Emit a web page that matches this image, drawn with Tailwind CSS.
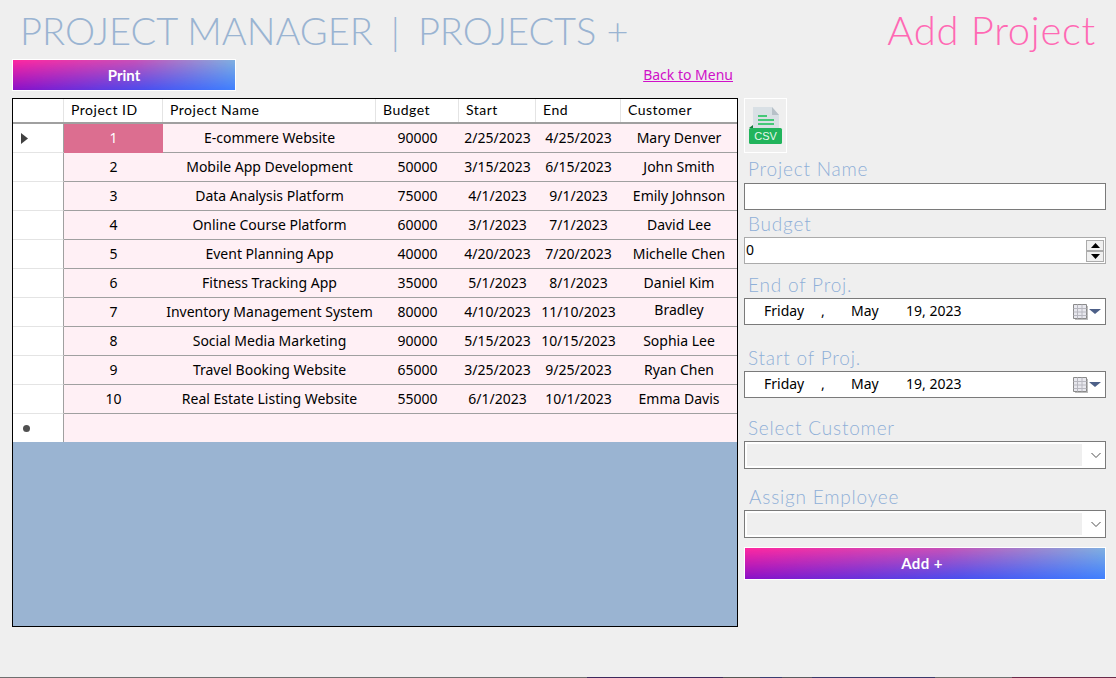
<!DOCTYPE html>
<html lang="en">
<head>
  <meta charset="UTF-8">
  <script src="https://cdn.jsdelivr.net/npm/@tailwindcss/browser@4"></script>
  <title>Project Manager | Projects +</title>
</head>
<body class="flex h-[678px] w-[1116px] flex-col overflow-hidden bg-[#efefef] font-['Noto_Sans',sans-serif] text-black">

  <header class="flex h-[59px] items-start justify-between pl-[20px] pr-[20px] pt-[7px]">
    <h1 class="flex font-['Lato',sans-serif] text-[38px] font-light leading-[46px] text-[#9ab4d2]"><span>PROJECT MANAGER</span><span class="ml-[18px]">|</span><span class="ml-[18px]">PROJECTS +</span></h1>
    <h2 class="font-['Lato',sans-serif] text-[40px] font-light leading-[46px] tracking-[0.7px] text-[#ff69b4]">Add Project</h2>
  </header>

  <div class="flex gap-[6px] pl-[12px]">
    <main class="w-[726px]">
      <div class="flex h-[39px] items-start justify-between pr-[5px]">
        <button class="relative flex h-[32px] w-[224px] items-center justify-center overflow-hidden border border-white bg-[linear-gradient(to_right,#8a10c8,#4a50f0_60%,#4080ff)] text-white">
          <span class="absolute inset-0 bg-[linear-gradient(to_right,#ff28a0,#c850b8_55%,#80b0e0)] [mask-image:linear-gradient(to_bottom,black,transparent)]"></span>
          <span class="relative font-['Lato',sans-serif] text-[15px] font-bold">Print</span>
        </button>
        <a href="#" class="mt-[6px] text-sm text-[#d010c8] underline">Back to Menu</a>
      </div>

      <div class="h-[529px] border border-black bg-[#9ab4d2] text-sm">
        <div class="grid h-[25px] grid-cols-[51px_99px_213px_83px_77px_85px_1fr] border-b-[2px] border-[#a0a0a0] bg-white font-['Lato',sans-serif] text-[14px] leading-[21px] tracking-[0.5px]">
          <div class="border-r border-[#e4e4e4]"></div>
          <div class="border-r border-[#e4e4e4] pl-[7px]">Project ID</div>
          <div class="border-r border-[#e4e4e4] pl-[7px]">Project Name</div>
          <div class="border-r border-[#e4e4e4] pl-[7px]">Budget</div>
          <div class="border-r border-[#e4e4e4] pl-[7px]">Start</div>
          <div class="border-r border-[#e4e4e4] pl-[7px]">End</div>
          <div class="pl-[7px]">Customer</div>
        </div>

        <div class="grid h-[29px] grid-cols-[51px_99px_213px_83px_77px_85px_1fr] items-start border-b border-[#a0a0a0] bg-[#fff0f5] text-center leading-[27px]">
          <div class="flex h-[29px] items-center border-r border-b border-[#e4e4e4] border-r-[#a0a0a0] bg-white pl-[8px]"><svg width="7" height="11" viewBox="0 0 7 11"><path d="M0 0l7 5.500L0 11z" fill="#404040"/></svg></div>
          <div class="h-full bg-[#dc6e90] text-white">1</div><div>E-commere Website</div><div>90000</div><div>2/25/2023</div><div>4/25/2023</div><div>Mary Denver</div>
        </div>
        <div class="grid h-[29px] grid-cols-[51px_99px_213px_83px_77px_85px_1fr] items-start border-b border-[#a0a0a0] bg-[#fff0f5] text-center leading-[27px]">
          <div class="h-[29px] border-r border-b border-[#e4e4e4] border-r-[#a0a0a0] bg-white"></div>
          <div>2</div><div>Mobile App Development</div><div>50000</div><div>3/15/2023</div><div>6/15/2023</div><div>John Smith</div>
        </div>
        <div class="grid h-[29px] grid-cols-[51px_99px_213px_83px_77px_85px_1fr] items-start border-b border-[#a0a0a0] bg-[#fff0f5] text-center leading-[27px]">
          <div class="h-[29px] border-r border-b border-[#e4e4e4] border-r-[#a0a0a0] bg-white"></div>
          <div>3</div><div>Data Analysis Platform</div><div>75000</div><div>4/1/2023</div><div>9/1/2023</div><div>Emily Johnson</div>
        </div>
        <div class="grid h-[29px] grid-cols-[51px_99px_213px_83px_77px_85px_1fr] items-start border-b border-[#a0a0a0] bg-[#fff0f5] text-center leading-[27px]">
          <div class="h-[29px] border-r border-b border-[#e4e4e4] border-r-[#a0a0a0] bg-white"></div>
          <div>4</div><div>Online Course Platform</div><div>60000</div><div>3/1/2023</div><div>7/1/2023</div><div>David Lee</div>
        </div>
        <div class="grid h-[29px] grid-cols-[51px_99px_213px_83px_77px_85px_1fr] items-start border-b border-[#a0a0a0] bg-[#fff0f5] text-center leading-[27px]">
          <div class="h-[29px] border-r border-b border-[#e4e4e4] border-r-[#a0a0a0] bg-white"></div>
          <div>5</div><div>Event Planning App</div><div>40000</div><div>4/20/2023</div><div>7/20/2023</div><div>Michelle Chen</div>
        </div>
        <div class="grid h-[29px] grid-cols-[51px_99px_213px_83px_77px_85px_1fr] items-start border-b border-[#a0a0a0] bg-[#fff0f5] text-center leading-[27px]">
          <div class="h-[29px] border-r border-b border-[#e4e4e4] border-r-[#a0a0a0] bg-white"></div>
          <div>6</div><div>Fitness Tracking App</div><div>35000</div><div>5/1/2023</div><div>8/1/2023</div><div>Daniel Kim</div>
        </div>
        <div class="grid h-[29px] grid-cols-[51px_99px_213px_83px_77px_85px_1fr] items-start border-b border-[#a0a0a0] bg-[#fff0f5] text-center leading-[27px]">
          <div class="h-[29px] border-r border-b border-[#e4e4e4] border-r-[#a0a0a0] bg-white"></div>
          <div>7</div><div>Inventory Management System</div><div>80000</div><div>4/10/2023</div><div>11/10/2023</div><div class="leading-[23px]">Bradley</div>
        </div>
        <div class="grid h-[29px] grid-cols-[51px_99px_213px_83px_77px_85px_1fr] items-start border-b border-[#a0a0a0] bg-[#fff0f5] text-center leading-[27px]">
          <div class="h-[29px] border-r border-b border-[#e4e4e4] border-r-[#a0a0a0] bg-white"></div>
          <div>8</div><div>Social Media Marketing</div><div>90000</div><div>5/15/2023</div><div>10/15/2023</div><div>Sophia Lee</div>
        </div>
        <div class="grid h-[29px] grid-cols-[51px_99px_213px_83px_77px_85px_1fr] items-start border-b border-[#a0a0a0] bg-[#fff0f5] text-center leading-[27px]">
          <div class="h-[29px] border-r border-b border-[#e4e4e4] border-r-[#a0a0a0] bg-white"></div>
          <div>9</div><div>Travel Booking Website</div><div>65000</div><div>3/25/2023</div><div>9/25/2023</div><div>Ryan Chen</div>
        </div>
        <div class="grid h-[29px] grid-cols-[51px_99px_213px_83px_77px_85px_1fr] items-start border-b border-[#a0a0a0] bg-[#fff0f5] text-center leading-[27px]">
          <div class="h-[29px] border-r border-b border-[#e4e4e4] border-r-[#a0a0a0] bg-white"></div>
          <div>10</div><div>Real Estate Listing Website</div><div>55000</div><div>6/1/2023</div><div>10/1/2023</div><div>Emma Davis</div>
        </div>
        <div class="flex h-[28px] bg-[#fff0f5]">
          <div class="flex h-[28px] w-[51px] items-center border-r border-[#a0a0a0] bg-white pl-[10px] pt-px"><span class="block size-[7px] rounded-full bg-[#505050]"></span></div>
        </div>
      </div>
    </main>

    <aside class="flex w-[362px] flex-col pt-[39px]">
      <button class="flex h-[55px] w-[43px] items-start justify-start border border-white pl-[3px] pt-[7px]">
        <svg width="36" height="40" viewBox="0 0 36 40">
          <path d="M5 1h19l7 8v14H5z" fill="#d9e0e5"/>
          <path d="M24 1l7 8h-7z" fill="#b7c1c8"/>
          <path d="M10 10h9M10 14h16M10 18h16" stroke="#45c878" stroke-width="2"/>
          <path d="M1 22l4-3v3z" fill="#157a3e"/>
          <rect x="1" y="22" width="33" height="16" rx="1.500" fill="#21b45c"/>
          <text x="17.500" y="34" text-anchor="middle" font-family="Liberation Sans" font-size="11" fill="#e8f8ee">CSV</text>
        </svg>
      </button>

      <label class="mt-[5px] pl-[4px] font-['Lato',sans-serif] text-[19px] font-light leading-[22px] tracking-[0.8px] text-[#8fb0d8]">Project Name</label>
      <input class="mt-[3px] h-[27px] border border-[#7a7a7a] bg-white" type="text">

      <label class="mt-[3px] pl-[4px] font-['Lato',sans-serif] text-[19px] font-light leading-[22px] tracking-[0.8px] text-[#8fb0d8]">Budget</label>
      <div class="mt-[2px] flex h-[27px] items-center justify-between border border-[#ababab] bg-white pl-px pr-px text-sm">
        <span class="mb-[2px]">0</span>
        <span class="flex flex-col">
          <span class="flex h-[11px] w-[18px] items-center justify-center border border-[#ababab] bg-[#f0f0f0]"><svg width="9" height="5" viewBox="0 0 9 5"><path d="M4.500 0L9 5H0z"/></svg></span>
          <span class="flex h-[11px] w-[18px] items-center justify-center border border-[#ababab] bg-[#f0f0f0]"><svg width="9" height="5" viewBox="0 0 9 5"><path d="M0 0h9L4.500 5z"/></svg></span>
        </span>
      </div>

      <label class="mt-[10px] pl-[4px] font-['Lato',sans-serif] text-[19px] font-light leading-[22px] tracking-[0.8px] text-[#8fb0d8]">End of Proj.</label>
      <div class="mt-[2px] flex h-[27px] items-center justify-between border border-[#7a7a7a] bg-white pl-[19px] pr-[4px] text-sm">
        <span class="mb-[2px] flex"><span class="w-[57px]">Friday</span><span class="w-[30px]">,</span><span class="w-[55px]">May</span><span>19, 2023</span></span>
        <svg width="28" height="16" viewBox="0 0 28 16">
          <path d="M2 2h13v14H2z" fill="#bdbdbd"/>
          <path d="M.5.5h13v14H.5z" fill="#e8e8ee" stroke="#8a8a8a"/>
          <path d="M.5 4.500h13M.5 8h13M.5 11.500h13M4.500.5v14M9 .5v14" stroke="#b8b8c0"/>
          <path d="M16 5h12l-6 5z" fill="#4d6088"/>
        </svg>
      </div>

      <label class="mt-[22px] pl-[4px] font-['Lato',sans-serif] text-[19px] font-light leading-[22px] tracking-[0.8px] text-[#8fb0d8]">Start of Proj.</label>
      <div class="mt-[2px] flex h-[27px] items-center justify-between border border-[#7a7a7a] bg-white pl-[19px] pr-[4px] text-sm">
        <span class="mb-[2px] flex"><span class="w-[57px]">Friday</span><span class="w-[30px]">,</span><span class="w-[55px]">May</span><span>19, 2023</span></span>
        <svg width="28" height="16" viewBox="0 0 28 16">
          <path d="M2 2h13v14H2z" fill="#bdbdbd"/>
          <path d="M.5.5h13v14H.5z" fill="#e8e8ee" stroke="#8a8a8a"/>
          <path d="M.5 4.500h13M.5 8h13M.5 11.500h13M4.500.5v14M9 .5v14" stroke="#b8b8c0"/>
          <path d="M16 5h12l-6 5z" fill="#4d6088"/>
        </svg>
      </div>

      <label class="mt-[19px] pl-[4px] font-['Lato',sans-serif] text-[19px] font-light leading-[22px] tracking-[0.8px] text-[#8fb0d8]">Select Customer</label>
      <div class="mt-[2px] flex h-[28px] items-center justify-between border border-[#7a7a7a] bg-white p-[2px] pr-[3px]">
        <span class="h-full w-[335px] bg-[#efefef]"></span>
        <svg width="12" height="7" viewBox="0 0 12 7"><path d="M1.500 1l4.500 4.500L10.500 1" fill="none" stroke="#505050"/></svg>
      </div>

      <label class="mt-[17px] pl-[5px] font-['Lato',sans-serif] text-[19px] font-light leading-[22px] tracking-[0.8px] text-[#8fb0d8]">Assign Employee</label>
      <div class="mt-[2px] flex h-[28px] items-center justify-between border border-[#7a7a7a] bg-white p-[2px] pr-[3px]">
        <span class="h-full w-[335px] bg-[#efefef]"></span>
        <svg width="12" height="7" viewBox="0 0 12 7"><path d="M1.500 1l4.500 4.500L10.500 1" fill="none" stroke="#505050"/></svg>
      </div>

      <button class="relative mt-[9px] flex h-[33px] w-[362px] items-center justify-center overflow-hidden border border-white bg-[linear-gradient(to_right,#8a10c8,#4a50f0_60%,#4080ff)] pr-[6px] text-white">
        <span class="absolute inset-0 bg-[linear-gradient(to_right,#ff28a0,#c850b8_55%,#80b0e0)] [mask-image:linear-gradient(to_bottom,black,transparent)]"></span>
        <span class="relative font-['Lato',sans-serif] text-[15px] font-bold tracking-[0.4px]">Add +</span>
      </button>
    </aside>
  </div>

  <div class="mt-auto h-px bg-[linear-gradient(to_right,#6f6f6f_587px,#3d2a5c_587px_723px,#555555_723px_760px,#3a3f70_760px_782px,#5a5a60_782px_812px,#3a3a6a_812px_935px,#6f6f6f_935px_1012px,#6a2a4a_1012px)]"></div>
</body>
</html>
